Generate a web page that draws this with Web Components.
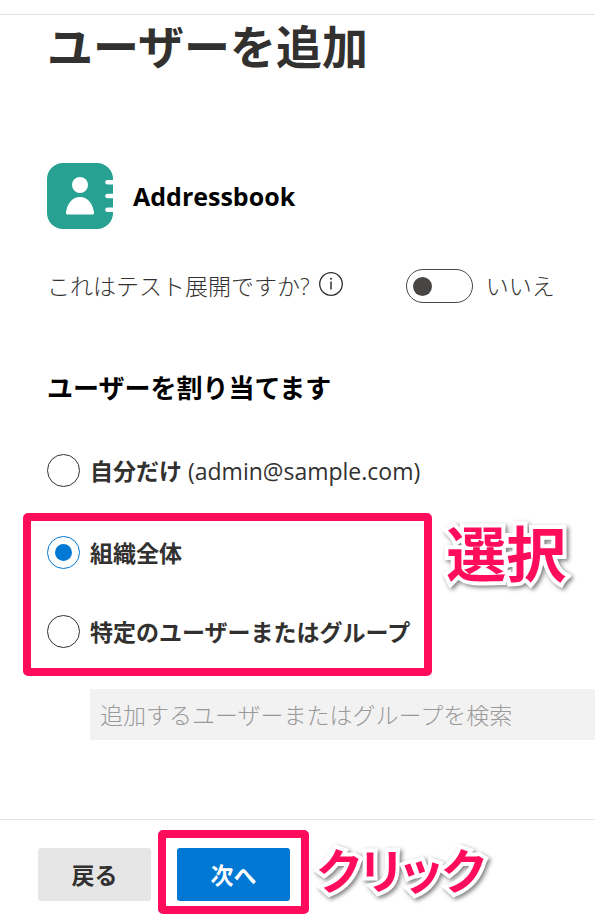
<!DOCTYPE html>
<html lang="ja">
<head>
<meta charset="UTF-8">
<meta name="viewport" content="width=device-width, initial-scale=1.0">
<title>ユーザーを追加</title>
<style>
    body {
        margin: 0;
        background: #fff;
        color: #323130;
        font-family: "Open Sans", "Noto Sans CJK JP", sans-serif;
        font-size: 23px;
        line-height: 32px;
        overflow-x: hidden;
    }
</style>
</head>
<body>
<deploy-panel>
    <app-title name="Addressbook"></app-title>
    <test-toggle></test-toggle>
    <assign-users></assign-users>
    <panel-footer slot="footer"></panel-footer>
</deploy-panel>

<script>
class DeployPanel extends HTMLElement {
    constructor() {
        super();
        this.attachShadow({ mode: 'open' });
        this.shadowRoot.innerHTML = `
            <style>
                :host {
                    display: block;
                    padding-top: 14px;
                }
                main {
                    border-top: 1px solid #e1e1e1;
                    padding-left: 47px;
                }
                h1 {
                    margin: 0 0 86px;
                    font-size: 46px;
                    line-height: 62px;
                    font-weight: 700;
                }
            </style>
            <main>
                <h1>ユーザーを追加</h1>
                <slot></slot>
            </main>
            <slot name="footer"></slot>
        `;
    }
}

class AppTitle extends HTMLElement {
    constructor() {
        super();
        this.attachShadow({ mode: 'open' });
        this.shadowRoot.innerHTML = `
            <style>
                :host {
                    display: flex;
                    align-items: center;
                    gap: 20px;
                    margin-bottom: 40px;
                    color: #000;
                }
                svg {
                    width: 66px;
                    height: 66px;
                    flex: none;
                }
                h2 {
                    margin: 0;
                    font-size: 25px;
                    line-height: 32px;
                    font-weight: 700;
                }
            </style>
            <svg viewBox="0 0 66 66" aria-hidden="true">
                <rect width="66" height="66" rx="16" fill="#26a192"/>
                <circle cx="33" cy="22" r="8" fill="#fff"/>
                <path d="M21 51.5c-1.7 0-2.3-1-2-2.6C20.5 40 26 34 33 34s12.500 6 14 14.900c.3 1.600-.3 2.600-2 2.600z" fill="#fff"/>
                <path d="M66 17h-5.500a2.300 2.300 0 0 0 0 4.600H66zM66 30.700h-5.500a2.300 2.300 0 0 0 0 4.600H66zM66 44.500h-5.500a2.300 2.300 0 0 0 0 4.600H66z" fill="#fff"/>
            </svg>
            <h2></h2>
        `;
    }

    connectedCallback() {
        this.shadowRoot.querySelector('h2').textContent = this.getAttribute('name');
    }
}

class TestToggle extends HTMLElement {
    constructor() {
        super();
        this.attachShadow({ mode: 'open' });
        this.shadowRoot.innerHTML = `
            <style>
                :host {
                    display: flex;
                    align-items: center;
                    margin-bottom: 69px;
                    font-weight: 300;
                    white-space: nowrap;
                }
                .info {
                    display: flex;
                    margin: 0 62px 0 8px;
                    padding: 0 0 4px;
                    border: none;
                    background: none;
                    color: inherit;
                }
                svg {
                    width: 26px;
                    height: 26px;
                }
                input {
                    appearance: none;
                    display: flex;
                    align-items: center;
                    box-sizing: border-box;
                    width: 67px;
                    height: 34px;
                    margin: 0 13px 0 0;
                    padding: 0 6px;
                    border: 1px solid #484644;
                    border-radius: 17px;
                }
                input::before {
                    content: "";
                    width: 19px;
                    height: 19px;
                    border-radius: 50%;
                    background: #484644;
                }
                input:checked {
                    justify-content: flex-end;
                }
            </style>
            <label for="test">これはテスト展開ですか?</label>
            <button class="info" type="button" aria-label="詳細">
                <svg viewBox="0 0 26 26" fill="none" stroke="currentColor" aria-hidden="true">
                    <circle cx="13" cy="13" r="11.300" stroke-width="1.300"/>
                    <path d="M13 10.500v8" stroke-width="1.500"/>
                    <circle cx="13" cy="7.800" r="1" fill="currentColor" stroke="none"/>
                </svg>
            </button>
            <input id="test" type="checkbox" role="switch" aria-label="これはテスト展開ですか?">
            <span>いいえ</span>
        `;

        const input = this.shadowRoot.querySelector('input');
        input.addEventListener('change', () => {
            this.shadowRoot.querySelector('span').textContent = input.checked ? 'はい' : 'いいえ';
        });
    }
}

// Pink frame round its content, with a caption beside it
class CalloutFrame extends HTMLElement {
    constructor() {
        super();
        this.attachShadow({ mode: 'open' });
        this.shadowRoot.innerHTML = `
            <style>
                :host {
                    display: flex;
                    align-items: flex-start;
                    gap: var(--caption-gap, 14px);
                }
                .frame {
                    flex: none;
                    border: 8px solid #ff0d5c;
                    border-radius: 5px;
                    padding: var(--frame-padding, 11px);
                }
                .caption {
                    flex: none;
                    padding-top: 9px;
                    color: #ff0d5c;
                    font-size: var(--caption-size, 60px);
                    line-height: 64px;
                    font-weight: 700;
                    font-feature-settings: "palt";
                    white-space: nowrap;
                    -webkit-text-stroke: 8px #fff;
                    paint-order: stroke fill;
                    filter: drop-shadow(2px 2px 2px rgba(0, 0, 0, 0.5));
                }
            </style>
            <div class="frame"><slot></slot></div>
            <span class="caption"></span>
        `;
    }

    connectedCallback() {
        this.shadowRoot.querySelector('.caption').textContent = this.getAttribute('caption');
    }
}

class AssignUsers extends HTMLElement {
    constructor() {
        super();
        this.attachShadow({ mode: 'open' });
        this.shadowRoot.innerHTML = `
            <style>
                :host {
                    display: block;
                }
                h2 {
                    margin: 0 0 50px;
                    color: #000;
                    font-size: 26px;
                    line-height: 32px;
                    font-weight: 700;
                }
                label {
                    display: flex;
                    align-items: center;
                    gap: 10px;
                    font-weight: 700;
                    white-space: nowrap;
                }
                label small {
                    font-size: 23px;
                    font-weight: 400;
                }
                input[type="radio"] {
                    appearance: none;
                    display: grid;
                    place-items: center;
                    box-sizing: border-box;
                    flex: none;
                    width: 33px;
                    height: 33px;
                    margin: 0;
                    border: 1px solid #323130;
                    border-radius: 50%;
                }
                input[type="radio"]:checked {
                    border-color: #0078d4;
                }
                input[type="radio"]:checked::before {
                    content: "";
                    width: 17px;
                    height: 17px;
                    border-radius: 50%;
                    background: #0078d4;
                }
                callout-frame {
                    --frame-padding: 15px 14px 20px 16px;
                    margin: 26px 0 13px -24px;
                }
                .options {
                    display: grid;
                    gap: 46px;
                }
                .search {
                    display: block;
                    box-sizing: border-box;
                    width: calc(100% - 43px);
                    height: 51px;
                    margin: 0 0 0 43px;
                    padding: 0 10px;
                    border: none;
                    border-radius: 0;
                    background: #f3f2f2;
                    font: inherit;
                    font-weight: 300;
                }
                .search::placeholder {
                    color: #999;
                    opacity: 1;
                }
            </style>
            <h2>ユーザーを割り当てます</h2>
            <label>
                <input type="radio" name="assign" value="me">
                <span>自分だけ <small>(admin@sample.com)</small></span>
            </label>
            <callout-frame caption="選択">
                <div class="options">
                    <label><input type="radio" name="assign" value="all" checked>組織全体</label>
                    <label><input type="radio" name="assign" value="some">特定のユーザーまたはグループ</label>
                </div>
            </callout-frame>
            <input class="search" type="text" disabled aria-label="ユーザーまたはグループを検索" placeholder="追加するユーザーまたはグループを検索">
        `;

        const search = this.shadowRoot.querySelector('.search');
        this.shadowRoot.addEventListener('change', (e) => {
            if (e.target.name === 'assign') search.disabled = e.target.value !== 'some';
        });
    }
}

class PanelFooter extends HTMLElement {
    constructor() {
        super();
        this.attachShadow({ mode: 'open' });
        this.shadowRoot.innerHTML = `
            <style>
                :host {
                    display: flex;
                    align-items: flex-start;
                    gap: 7px;
                    margin-top: 79px;
                    padding: 10px 0 6px 38px;
                    border-top: 1px solid #e1e6e8;
                }
                button {
                    display: block;
                    width: 113px;
                    height: 53px;
                    padding: 0;
                    border: none;
                    border-radius: 3px;
                    background: #e6e6e6;
                    color: #323130;
                    font: inherit;
                    font-weight: 700;
                    cursor: pointer;
                }
                .back {
                    margin-top: 18px;
                }
                .next {
                    background: #0078d4;
                    color: #fff;
                }
                callout-frame {
                    --frame-padding: 10px 11px 5px;
                    --caption-size: 48px;
                    --caption-gap: 8px;
                }
            </style>
            <button class="back" type="button">戻る</button>
            <callout-frame caption="クリック">
                <button class="next" type="button">次へ</button>
            </callout-frame>
        `;
    }
}

customElements.define('deploy-panel', DeployPanel);
customElements.define('app-title', AppTitle);
customElements.define('test-toggle', TestToggle);
customElements.define('callout-frame', CalloutFrame);
customElements.define('assign-users', AssignUsers);
customElements.define('panel-footer', PanelFooter);
</script>
</body>
</html>
